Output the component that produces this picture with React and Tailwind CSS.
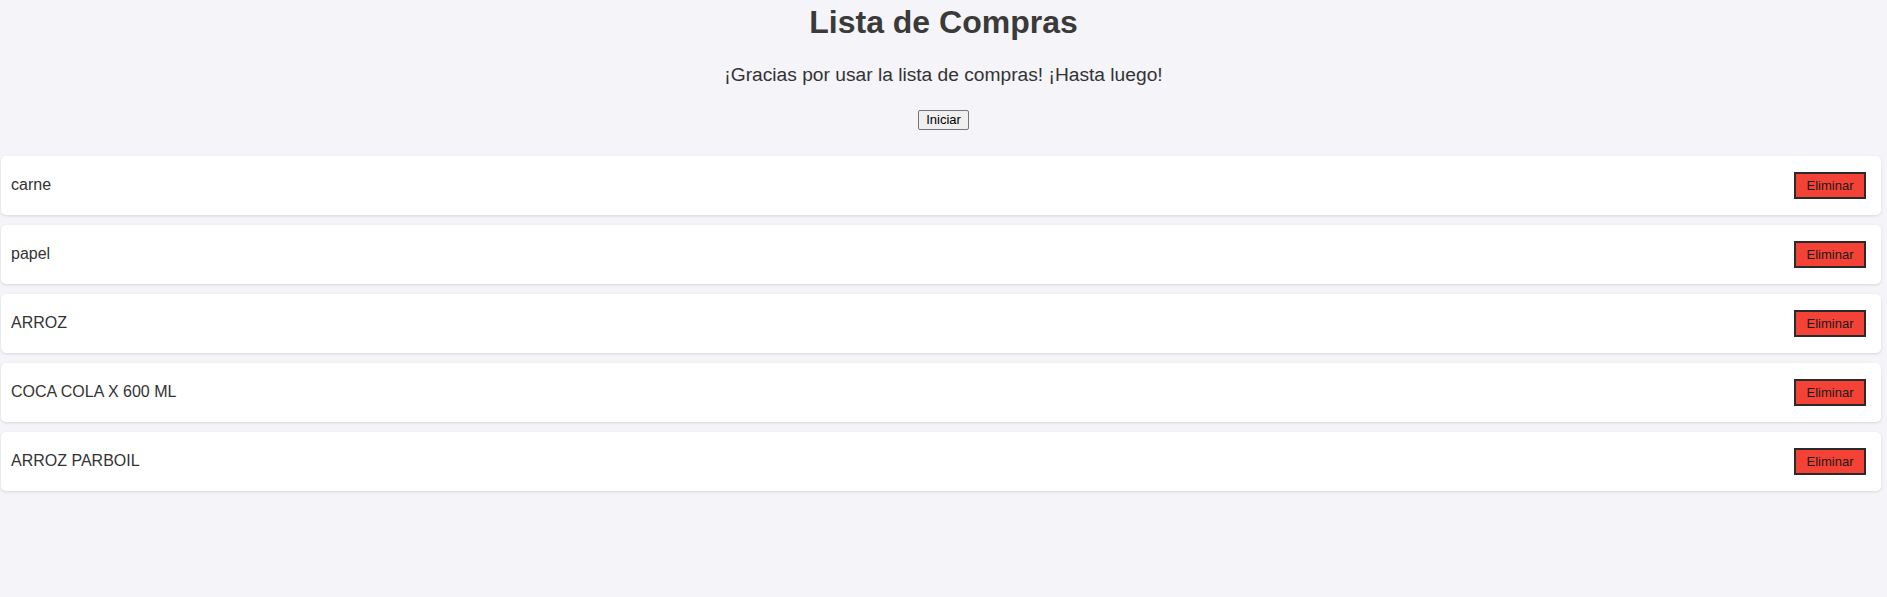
import React, { useState } from 'react';

const initialItems = ['carne', 'papel', 'ARROZ', 'COCA COLA X 600 ML', 'ARROZ PARBOIL'];

export default function App() {
  const [items, setItems] = useState(initialItems);

  const removeItem = (index) => {
    setItems(items.filter((_, i) => i !== index));
  };

  return (
    <div className="min-h-screen bg-[#f4f4f9] font-['Liberation_Sans',Arial,sans-serif] text-[#333]">
      {/* Header */}
      <div className="flex flex-col items-center pt-[4px]">
        <h1 className="text-[32px] font-bold leading-[37px] text-[#3a3a3a]">Lista de Compras</h1>
        <p className="mt-[22px] text-[19.2px] leading-[23px] text-[#333]">
          ¡Gracias por usar la lista de compras! ¡Hasta luego!
        </p>
        <button className="mt-[24px] h-[20px] px-[7px] text-[13px] leading-[16px] text-black bg-[#efefef] border border-[#767676] rounded-[2px]">
          Iniciar
        </button>
      </div>

      {/* List */}
      <ul className="mt-[26px] ml-[1px] mr-[6px] flex flex-col gap-[10px]">
        {items.map((item, index) => (
          <li
            key={item + index}
            className="h-[59px] flex items-center justify-between pl-[10px] pr-[15px] bg-white rounded-[5px] shadow-[0_1px_3px_rgba(0,0,0,0.12)]"
          >
            <span className="text-[16px] leading-[18px] pb-[1px] text-[#333]">{item}</span>
            <button
              onClick={() => removeItem(index)}
              className="w-[72px] h-[27px] text-[13px] text-[#1a1a1a] bg-[#f44336] border-2 border-[#2a2a2a]"
            >
              Eliminar
            </button>
          </li>
        ))}
      </ul>
    </div>
  );
}
